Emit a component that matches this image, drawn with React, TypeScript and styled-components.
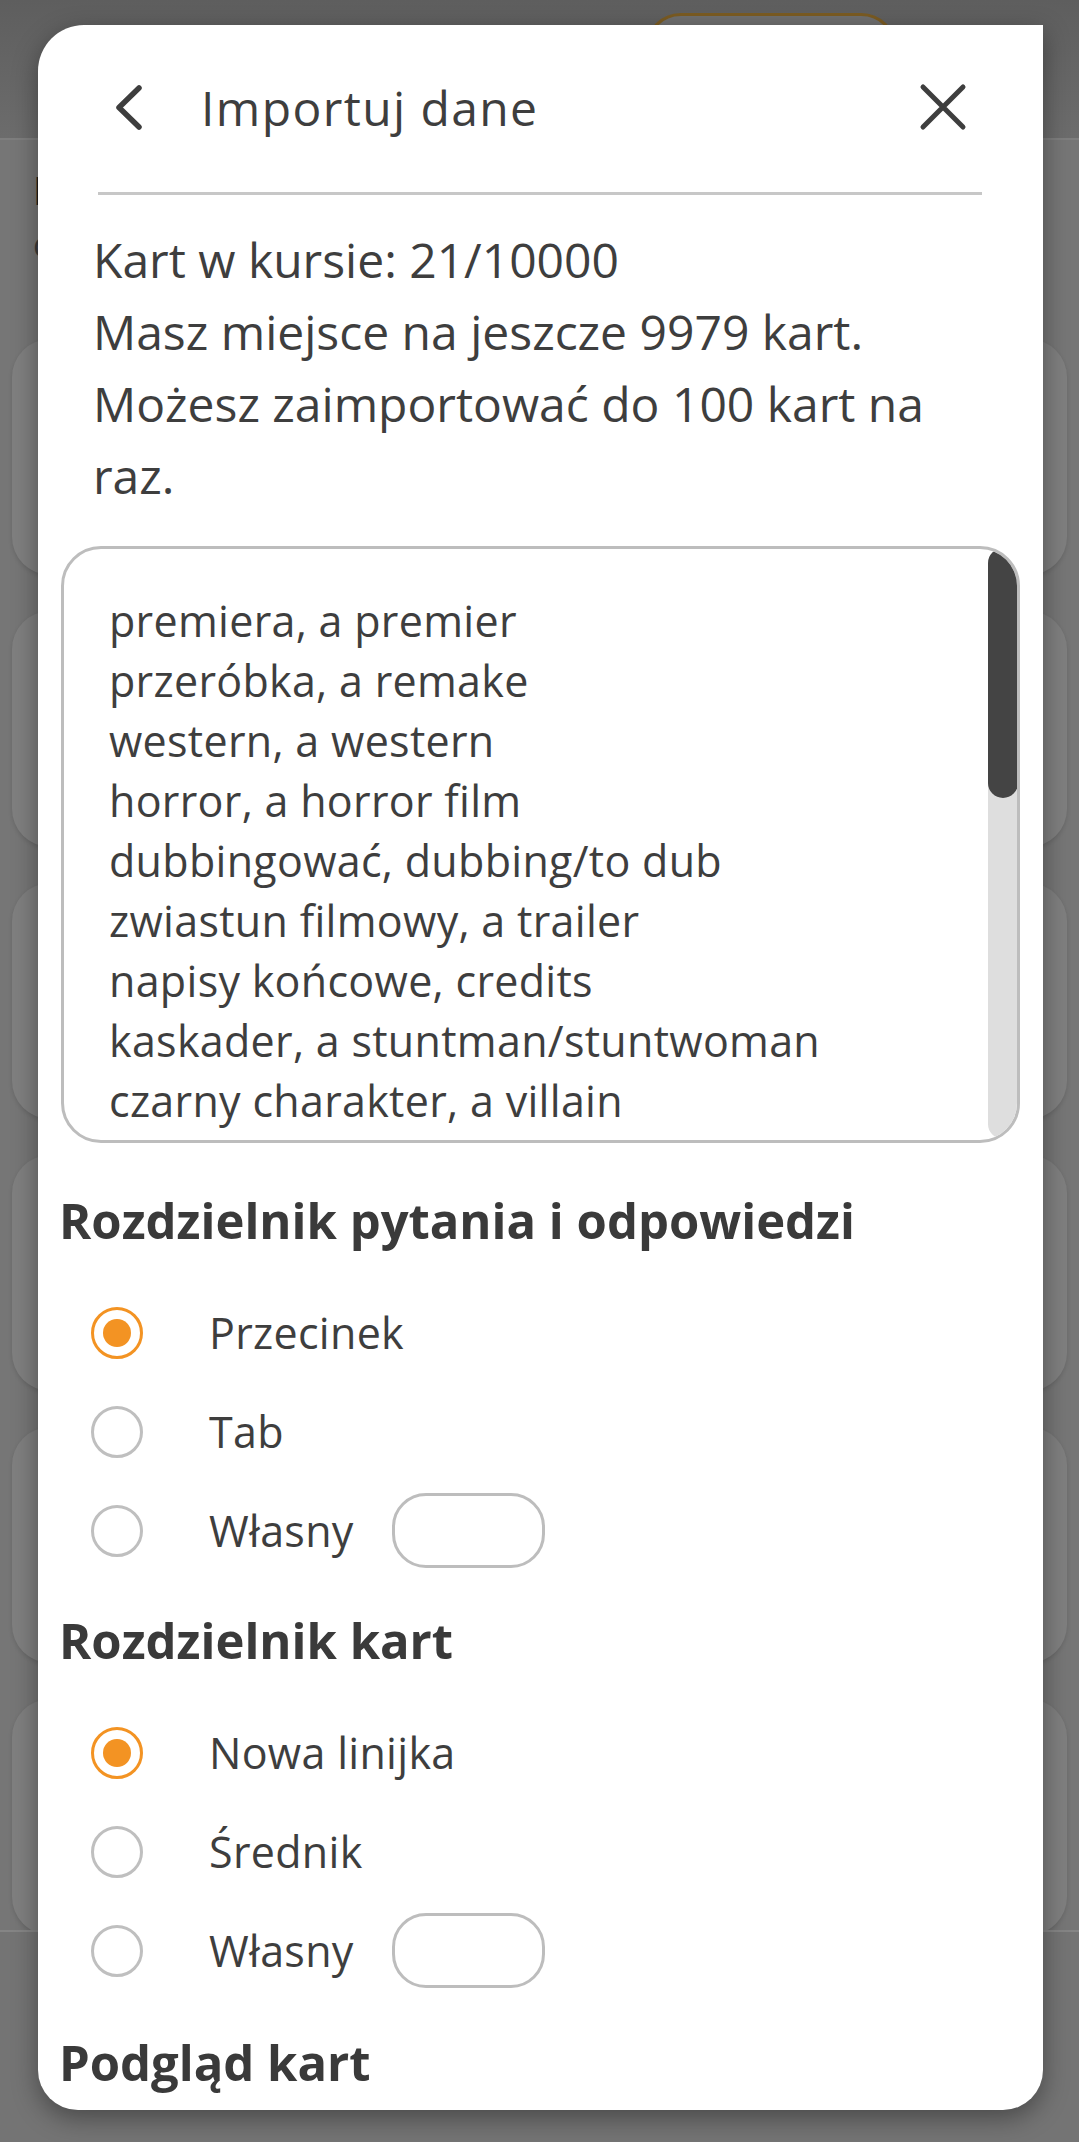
import React from "react";
import styled, { createGlobalStyle } from "styled-components";

const GlobalStyle = createGlobalStyle`
  html, body { margin: 0; padding: 0; }
  body { background: #767676; font-family: "Open Sans", "Noto Sans", sans-serif; }
  * { box-sizing: border-box; }
`;

const Screen = styled.div`
  position: relative;
  width: 1079px;
  height: 2142px;
  overflow: hidden;
  background: #767676;
`;

/* ---------- dimmed page behind the dialog ---------- */
const BgHeader = styled.header`
  height: 140px;
  background: linear-gradient(#5e5e5e, #6c6c6c);
  border-bottom: 2px solid #7e7e7e;
  display: flex;
  justify-content: flex-end;
  padding: 13px 182px 0 0;
`;

const BgPill = styled.div`
  width: 252px;
  height: 72px;
  border: 3px solid #7a5b22;
  border-radius: 36px;
  background: #6f6f6f;
`;

const BgBody = styled.main`
  height: 1790px;
  overflow: hidden;
  padding: 0 12px;
  display: flex;
  flex-direction: column;
`;

const BgTitle = styled.div`
  margin: 26px 0 0 21px;
  font-size: 40px;
  line-height: 48px;
  font-weight: 700;
  color: #1d1d1d;
`;

const BgSubtitle = styled.div`
  margin: 10px 0 0 21px;
  font-size: 34px;
  line-height: 40px;
  color: #3a3a3a;
`;

const BgCards = styled.div`
  margin-top: 75px;
  display: flex;
  flex-direction: column;
  gap: 36px;
`;

const BgCard = styled.div`
  height: 236px;
  border-radius: 38px;
  background: #7f7f7f;
  box-shadow: 0 2px 4px rgba(0, 0, 0, 0.12);
`;

const BgBottomBar = styled.footer`
  height: 212px;
  background: #747474;
  border-top: 2px solid #858585;
`;

/* ---------- dialog ---------- */
const Modal = styled.section`
  position: absolute;
  left: 38px;
  top: 25px;
  width: 1005px;
  height: 2085px;
  background: #ffffff;
  border-radius: 46px 0 40px 40px;
  overflow: hidden;
  box-shadow: 0 8px 26px rgba(0, 0, 0, 0.38);
  display: flex;
  flex-direction: column;
  color: #3e3e3e;
`;

const HeaderRow = styled.div`
  height: 164px;
  flex: none;
  display: flex;
  align-items: center;
  padding: 0 76px 0 75px;
`;

const IconButton = styled.button`
  border: 0;
  background: none;
  padding: 0;
  margin: 0;
  display: flex;
  align-items: center;
  justify-content: center;
  color: #3e3e3e;
  cursor: pointer;
`;

const Title = styled.h1`
  margin: 0 0 0 58px;
  flex: 1;
  font-size: 48px;
  font-weight: 400;
  letter-spacing: 1.4px;
  color: #3e3e3e;
`;

const Divider = styled.hr`
  flex: none;
  margin: 3px 61px 0 60px;
  height: 3px;
  border: 0;
  background: #c7c7c7;
`;

const Info = styled.div`
  flex: none;
  margin-top: 29px;
  padding: 0 40px 0 55px;
  max-width: 960px;
  font-size: 48px;
  line-height: 72px;
  color: #3e3e3e;
`;

const InfoLine = styled.p`
  margin: 0;
`;

const Content = styled.div`
  flex: none;
  padding: 0 23px;
  display: flex;
  flex-direction: column;
`;

const TextBox = styled.div`
  position: relative;
  margin-top: 34px;
  height: 597px;
  border: 3px solid #bdbdbd;
  border-radius: 40px;
  overflow: hidden;
  padding: 42px 80px 0 45px;
  font-size: 43px;
  letter-spacing: 0.3px;
  line-height: 60px;
  color: #3e3e3e;
  white-space: nowrap;
`;

const TextLine = styled.div``;

const ScrollTrack = styled.div`
  position: absolute;
  top: -1px;
  right: -1px;
  bottom: 1px;
  width: 30px;
  border-radius: 15px;
  background: #dedede;
  box-shadow: 2px 0 0 #cacaca;
`;

const ScrollThumb = styled.div`
  height: 250px;
  border-radius: 15px;
  background: #444444;
`;

const SectionTitle = styled.h2<{ $gap: number }>`
  margin: ${(p) => p.$gap}px 0 0 -2px;
  font-size: 49px;
  line-height: 67px;
  font-weight: 700;
  color: #3a3a3a;
`;

const RadioList = styled.div`
  margin-top: 29px;
  display: flex;
  flex-direction: column;
`;

const RadioRow = styled.label`
  height: 99px;
  display: flex;
  align-items: center;
  padding-left: 30px;
  font-size: 43px;
  letter-spacing: 0.3px;
  color: #3e3e3e;
`;

const RadioCircle = styled.span<{ $checked?: boolean }>`
  width: 52px;
  height: 52px;
  flex: none;
  border-radius: 50%;
  border: 3px solid ${(p) => (p.$checked ? "#f39323" : "#bfbfbf")};
  display: flex;
  align-items: center;
  justify-content: center;
  margin-right: 66px;
  &::after {
    content: "";
    width: 28px;
    height: 28px;
    border-radius: 50%;
    background: ${(p) => (p.$checked ? "#f39323" : "transparent")};
  }
`;

const CustomInput = styled.span`
  width: 153px;
  height: 75px;
  margin-left: 38px;
  border: 3px solid #bdbdbd;
  border-radius: 34px;
  background: #fff;
`;

const ChevronLeft = () => (
  <svg width="30" height="47" viewBox="0 0 30 47" fill="none">
    <path d="M26 4 L6 23.5 L26 43" stroke="currentColor" strokeWidth="5.5" strokeLinecap="round" strokeLinejoin="round" />
  </svg>
);

const CloseIcon = () => (
  <svg width="48" height="48" viewBox="0 0 48 48" fill="none">
    <path d="M4 4 L44 44 M44 4 L4 44" stroke="currentColor" strokeWidth="5" strokeLinecap="round" />
  </svg>
);

const lines = [
  "premiera, a premier",
  "przeróbka, a remake",
  "western, a western",
  "horror, a horror film",
  "dubbingować, dubbing/to dub",
  "zwiastun filmowy, a trailer",
  "napisy końcowe, credits",
  "kaskader, a stuntman/stuntwoman",
  "czarny charakter, a villain",
  "scenariusz, a screenplay/a script",
];

type Option = { label: string; checked?: boolean; custom?: boolean };

const RadioGroup = ({ options }: { options: Option[] }) => (
  <RadioList>
    {options.map((o) => (
      <RadioRow key={o.label}>
        <RadioCircle $checked={o.checked} />
        {o.label}
        {o.custom && <CustomInput />}
      </RadioRow>
    ))}
  </RadioList>
);

export default function App() {
  return (
    <>
      <GlobalStyle />
      <Screen>
        <BgHeader>
          <BgPill />
        </BgHeader>
        <BgBody>
          <BgTitle>Import</BgTitle>
          <BgSubtitle>cards</BgSubtitle>
          <BgCards>
            {[0, 1, 2, 3, 4, 5].map((i) => (
              <BgCard key={i} />
            ))}
          </BgCards>
        </BgBody>
        <BgBottomBar />

        <Modal>
          <HeaderRow>
            <IconButton aria-label="Wstecz">
              <ChevronLeft />
            </IconButton>
            <Title>Importuj dane</Title>
            <IconButton aria-label="Zamknij">
              <CloseIcon />
            </IconButton>
          </HeaderRow>
          <Divider />
          <Info>
            <InfoLine>Kart w kursie: 21/10000</InfoLine>
            <InfoLine>Masz miejsce na jeszcze 9979 kart.</InfoLine>
            <InfoLine>Możesz zaimportować do 100 kart na raz.</InfoLine>
          </Info>
          <Content>
            <TextBox>
              {lines.map((l) => (
                <TextLine key={l}>{l}</TextLine>
              ))}
              <ScrollTrack>
                <ScrollThumb />
              </ScrollTrack>
            </TextBox>
            <SectionTitle $gap={44}>Rozdzielnik pytania i odpowiedzi</SectionTitle>
            <RadioGroup
              options={[
                { label: "Przecinek", checked: true },
                { label: "Tab" },
                { label: "Własny", custom: true },
              ]}
            />
            <SectionTitle $gap={27}>Rozdzielnik kart</SectionTitle>
            <RadioGroup
              options={[
                { label: "Nowa linijka", checked: true },
                { label: "Średnik" },
                { label: "Własny", custom: true },
              ]}
            />
            <SectionTitle $gap={29}>Podgląd kart</SectionTitle>
          </Content>
        </Modal>
      </Screen>
    </>
  );
}
